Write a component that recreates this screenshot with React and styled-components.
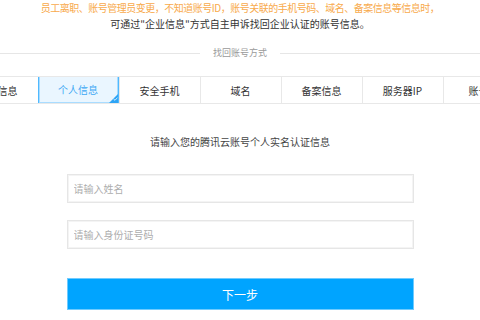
import React from 'react'
import styled, { createGlobalStyle } from 'styled-components'

const Global = createGlobalStyle`
  body {
    margin: 0;
    background: #fff;
    font-family: "Noto Sans CJK SC", "Noto Sans", sans-serif;
  }
`

const Page = styled.div`
  width: 480px;
  height: 320px;
  overflow: hidden;
  display: flex;
  flex-direction: column;
  align-items: center;
`

const Notice = styled.div`
  width: 100%;
  text-align: center;
  font-size: 10px;
  line-height: 16px;
  white-space: nowrap;
  p {
    margin: 0;
  }
  .warn {
    color: #f8aa4c;
    letter-spacing: -0.5px;
  }
  .tip {
    color: #333;
  }
`

const Divider = styled.div`
  width: 100%;
  margin-top: 13px;
  display: flex;
  align-items: center;
  gap: 13px;
  font-size: 9px;
  line-height: 16px;
  color: #9a9a9a;
  &::before,
  &::after {
    content: '';
    flex: 1;
    height: 1px;
    background: #e6e6e6;
  }
`

const TabBar = styled.div`
  width: 100%;
  margin-top: 15px;
  height: 26px;
  display: flex;
  justify-content: center;
  overflow: hidden;
  border-top: 1px solid #e8e8e8;
  border-bottom: 1px solid #e8e8e8;
`

const Track = styled.div`
  flex: none;
  display: flex;
`

const Tab = styled.div`
  flex: none;
  width: 81px;
  box-sizing: border-box;
  position: relative;
  display: flex;
  align-items: center;
  justify-content: center;
  font-size: 10px;
  color: ${p => (p.$active ? '#3ea8f4' : '#333')};
  background: ${p => (p.$active ? '#eaf6ff' : '#fff')};
  border-left: 1px solid ${p => (p.$active ? 'transparent' : '#e8e8e8')};
  ${p =>
    p.$active &&
    `
    margin: -2px 0 -1px;
    border: 1px solid #4fb9ff;
    box-shadow: inset 0 0 0 1px #a9dcff;
    z-index: 1;
  `}
`

const Corner = styled.span`
  position: absolute;
  right: 0;
  bottom: 0;
  width: 0;
  height: 0;
  border-left: 9px solid transparent;
  border-bottom: 9px solid #2ea4f5;
  svg {
    position: absolute;
    right: 0;
    top: 3px;
  }
`

const Heading = styled.div`
  margin-top: 30px;
  font-size: 10px;
  line-height: 16px;
  color: #444;
`

const Field = styled.input`
  box-sizing: border-box;
  width: 347px;
  height: 29px;
  margin-top: ${p => p.$gap}px;
  padding: 0 6px;
  border: 1px solid #e6e6e6;
  box-shadow: inset 0 0 0 1px #f4f4f4;
  outline: none;
  font-family: inherit;
  font-size: 10px;
  color: #333;
  &::placeholder {
    color: #adadad;
  }
`

const NextButton = styled.button`
  box-sizing: border-box;
  width: 347px;
  height: 32px;
  margin-top: 29px;
  border: 1px solid #6fcbff;
  background: #00a4ff;
  color: #fff;
  font-family: inherit;
  font-size: 12px;
  cursor: pointer;
`

const tabs = ['企业信息', '个人信息', '安全手机', '域名', '备案信息', '服务器IP', '账号ID']

export default function App() {
  return (
    <Page>
      <Global />
      <Notice>
        <p className="warn">
          员工离职、账号管理员变更，不知道账号ID，账号关联的手机号码、域名、备案信息等信息时，
        </p>
        <p className="tip">可通过"企业信息"方式自主申诉找回企业认证的账号信息。</p>
      </Notice>
      <Divider>找回账号方式</Divider>
      <TabBar>
        <Track>
          {tabs.map(t => (
            <Tab key={t} $active={t === '个人信息'}>
              {t}
              {t === '个人信息' && (
                <Corner>
                  <svg width="5" height="4" viewBox="0 0 5 4">
                    <path d="M0.5 2 L2 3.3 L4.5 0.6" stroke="#fff" strokeWidth="0.8" fill="none" />
                  </svg>
                </Corner>
              )}
            </Tab>
          ))}
        </Track>
      </TabBar>
      <Heading>请输入您的腾讯云账号个人实名认证信息</Heading>
      <Field $gap={24} placeholder="请输入姓名" />
      <Field $gap={17} placeholder="请输入身份证号码" />
      <NextButton>下一步</NextButton>
    </Page>
  )
}
